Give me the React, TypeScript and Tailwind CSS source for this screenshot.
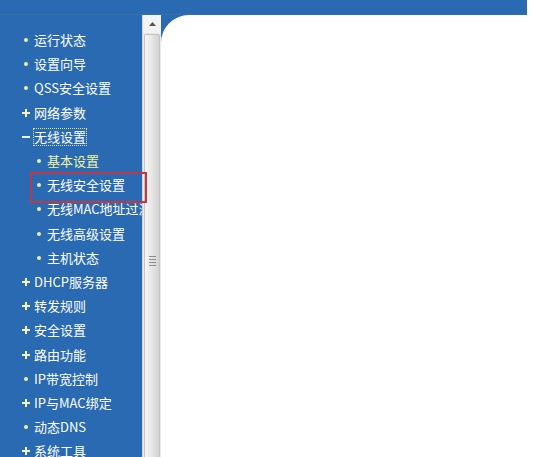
type Item = {
  label: string;
  mark: "dot" | "plus" | "minus";
  sub?: boolean;
  active?: boolean;
  focus?: boolean;
};

const items: Item[] = [
  { label: "运行状态", mark: "dot" },
  { label: "设置向导", mark: "dot" },
  { label: "QSS安全设置", mark: "dot" },
  { label: "网络参数", mark: "plus" },
  { label: "无线设置", mark: "minus", focus: true },
  { label: "基本设置", mark: "dot", sub: true, active: true },
  { label: "无线安全设置", mark: "dot", sub: true },
  { label: "无线MAC地址过滤", mark: "dot", sub: true },
  { label: "无线高级设置", mark: "dot", sub: true },
  { label: "主机状态", mark: "dot", sub: true },
  { label: "DHCP服务器", mark: "plus" },
  { label: "转发规则", mark: "plus" },
  { label: "安全设置", mark: "plus" },
  { label: "路由功能", mark: "plus" },
  { label: "IP带宽控制", mark: "dot" },
  { label: "IP与MAC绑定", mark: "plus" },
  { label: "动态DNS", mark: "dot" },
  { label: "系统工具", mark: "plus" },
];

function Mark({ kind }: { kind: Item["mark"] }) {
  if (kind === "dot") {
    return <span className="block w-[4px] h-[4px] rounded-full bg-[#eef0a8]" />;
  }
  return (
    <svg width="8" height="8" viewBox="0 0 8 8">
      <rect x="0" y="3" width="8" height="2" fill={kind === "plus" ? "#f3f3b8" : "#f4f4f4"} />
      {kind === "plus" && <rect x="3" y="0" width="2" height="8" fill="#f3f3b8" />}
    </svg>
  );
}

function MenuRow({ item }: { item: Item }) {
  return (
    <div className={`flex items-center h-[24.2px] whitespace-nowrap ${item.sub ? "pl-[35px]" : "pl-[22px]"}`}>
      <span className="w-[8px] shrink-0 flex justify-center">
        <Mark kind={item.mark} />
      </span>
      <span
        className={`ml-[4px] shrink-0 leading-[16px] ${item.active ? "text-[#f2f2a0]" : "text-white"} ${
          item.focus ? "outline outline-1 outline-dotted outline-[#d8dde8] outline-offset-0" : ""
        }`}
      >
        {item.label}
      </span>
    </div>
  );
}

function Scrollbar() {
  return (
    <div className="w-[19px] shrink-0 h-full flex flex-col bg-[#e9e9e9] border-l border-[#d4d4d4] overflow-hidden">
      <div className="h-[18px] shrink-0 bg-[#f3f3f3] flex items-center justify-center">
        <svg width="7" height="4" viewBox="0 0 7 4">
          <path d="M3.5 0 L7 4 L0 4 Z" fill="#555" />
        </svg>
      </div>
      <div className="shrink-0 h-[454px] mx-[1px] mt-[1px] rounded-[2px] border border-[#c4c4c4] bg-gradient-to-r from-[#f7f7f7] via-[#e6e6e6] to-[#d2d2d2] flex items-center justify-center">
        <div className="flex flex-col gap-[2px]">
          <span className="block w-[7px] h-[1px] bg-[#8a8a8a]" />
          <span className="block w-[7px] h-[1px] bg-[#8a8a8a]" />
          <span className="block w-[7px] h-[1px] bg-[#8a8a8a]" />
          <span className="block w-[7px] h-[1px] bg-[#8a8a8a]" />
        </div>
      </div>
    </div>
  );
}

export default function App() {
  return (
    <div
      className="relative w-[533px] h-[457px] overflow-hidden bg-white text-[13px]"
      style={{ fontFamily: '"Noto Sans CJK SC", "Noto Sans", sans-serif' }}
    >
      <div className="h-[15px] w-[527px] bg-[#2a6ab2] border-b border-[#3a6fa8]" />
      <div className="flex h-[442px]">
        <nav className="w-[142px] shrink-0 h-full bg-[#2a6ab2] overflow-hidden pt-[13px]">
          {items.map((it) => (
            <MenuRow key={it.label} item={it} />
          ))}
        </nav>
        <Scrollbar />
        <div className="w-[366px] shrink-0 h-full bg-[#2a6ab2]">
          <div className="h-full bg-white rounded-tl-[28px] border-t border-[#fffaf0]" />
        </div>
        <div className="flex-1 bg-white" />
      </div>

      {/* red highlight box */}
      <div className="absolute z-10 left-[31px] top-[173px] w-[115px] h-[29px] outline-2 outline-solid outline-offset-[-1px] outline-[#c23744]" />
    </div>
  );
}
